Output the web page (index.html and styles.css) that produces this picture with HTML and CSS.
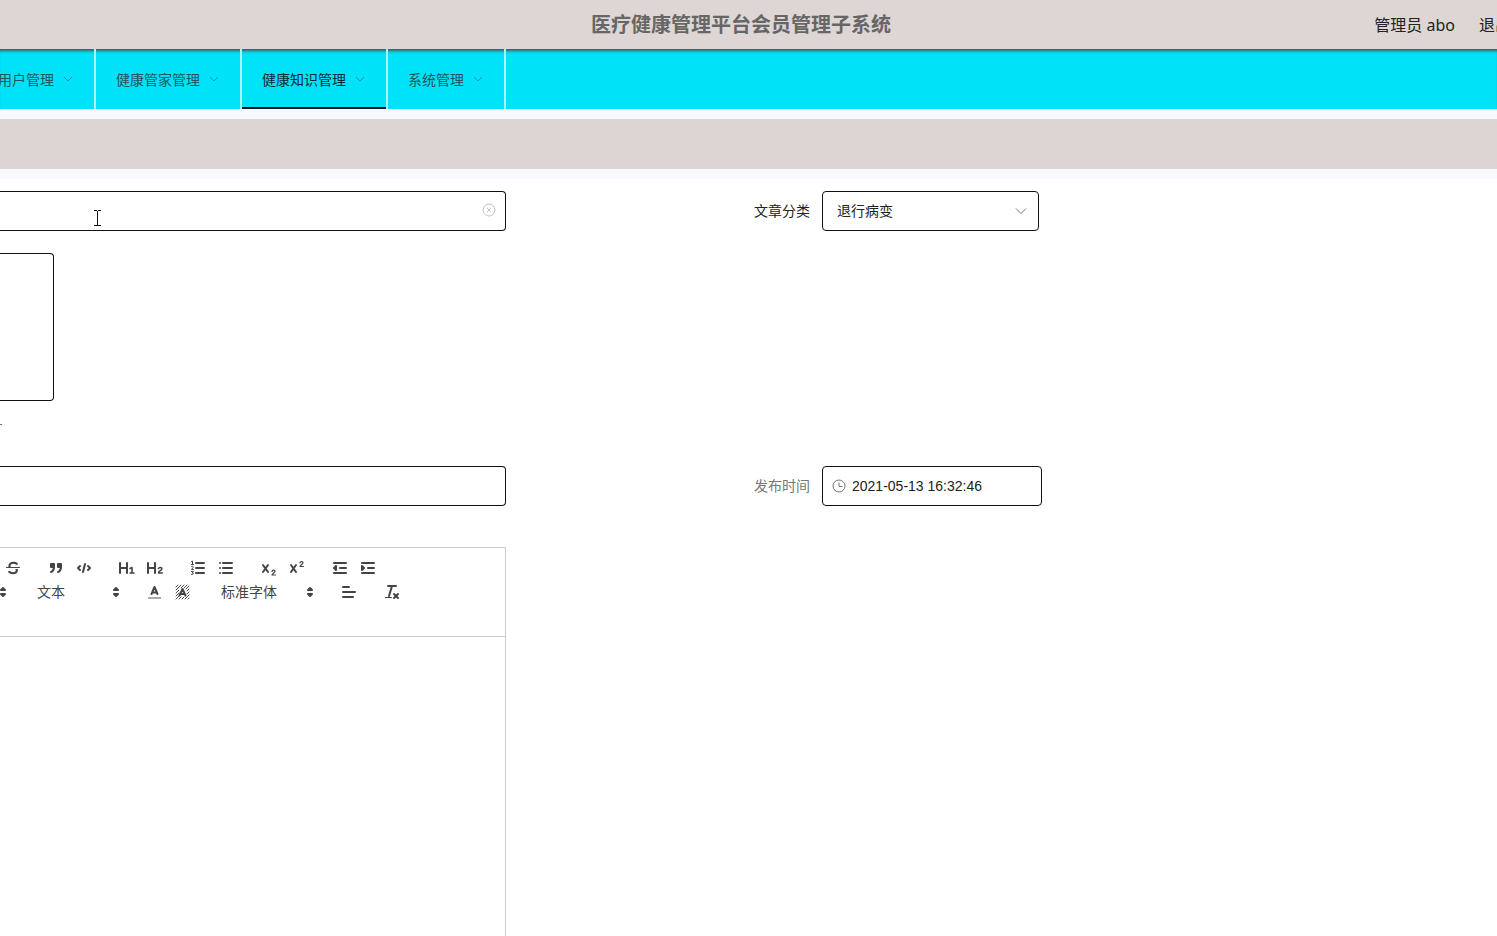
FILE: index.html
```html
<!DOCTYPE html>
<html lang="zh-CN">
<head>
<meta charset="utf-8">
<title>医疗健康管理平台会员管理子系统</title>
<link rel="stylesheet" href="styles.css">
</head>
<body>
<div class="shell">
  <header class="topbar">
    <h1 class="topbar-title">医疗健康管理平台会员管理子系统</h1>
    <div class="topbar-user">
      <span>管理员 abo</span>
      <a class="logout" href="#">退出</a>
    </div>
  </header>

  <nav class="menu">
    <a class="menu-item menu-item-cut" href="#">用户管理<svg class="caret" viewBox="0 0 12 12"><path d="M2 3l4 4 4-4"/></svg></a>
    <a class="menu-item" href="#">健康管家管理<svg class="caret" viewBox="0 0 12 12"><path d="M2 3l4 4 4-4"/></svg></a>
    <a class="menu-item menu-item-active" href="#">健康知识管理<svg class="caret" viewBox="0 0 12 12"><path d="M2 3l4 4 4-4"/></svg></a>
    <a class="menu-item" href="#">系统管理<svg class="caret" viewBox="0 0 12 12"><path d="M2 3l4 4 4-4"/></svg></a>
  </nav>

  <div class="band"></div>

  <form class="form">
    <div class="row">
      <div class="field">
        <input class="control" type="text" aria-label="文章标题">
        <button class="clear" type="button" aria-label="清空"><svg width="14" height="14" viewBox="0 0 14 14"><circle cx="7" cy="7" r="6"/><path d="M5 5l4 4M9 5l-4 4"/></svg></button>
      </div>
      <div class="item">
        <label class="label label-dark" for="category">文章分类</label>
        <div class="field field-select">
          <select class="control" id="category"><option>退行病变</option></select>
          <svg class="select-arrow" width="14" height="14" viewBox="0 0 14 14"><path d="M2 4.500l5 5 5-5"/></svg>
        </div>
      </div>
    </div>

    <div class="upload">
      <button class="upload-box" type="button" aria-label="图片"></button>
      <div class="upload-tip"></div>
    </div>

    <div class="row">
      <div class="field"><input class="control" type="text" aria-label="作者"></div>
      <div class="item">
        <label class="label" for="time">发布时间</label>
        <div class="field field-date">
          <svg class="clock" width="14" height="14" viewBox="0 0 14 14"><circle cx="7" cy="7" r="6"/><path d="M7 3.500V7.500H10.500"/></svg>
          <input class="control control-date" id="time" type="text" value="2021-05-13 16:32:46">
        </div>
      </div>
    </div>

    <div class="row row-editor">
      <div class="editor">
        <div class="toolbar">
          <div class="tools">
            <div class="group group-strike">
              <button class="tool" type="button" aria-label="删除线"><svg viewBox="0 0 18 18"><path class="s thin" d="M2.500 8.500h13"/><path class="f" d="M6.753 8a2.700 2.700 0 0 1-.253-.9C6.500 5.500 7.700 4.800 9.300 4.800c1.200 0 2.200.3 3 .9.500.4 1.100.2 1.400-.2s.2-1-.2-1.400C12.400 3.300 11 2.800 9.300 2.800 6.300 2.800 4.400 4.500 4.400 6.900c0 .4 0 .8.100 1.100zM11 10c.6.400.8.800.8 1.300 0 1.300-1.100 1.900-2.800 1.900-1.300 0-2.400-.4-3.200-1.100a1 1 0 0 0-1.400 1.500c1.200 1.100 2.800 1.600 4.600 1.600 2.900 0 4.900-1.400 4.900-3.900 0-.5-.1-.9-.2-1.300z"/></svg></button>
            </div>
            <div class="group">
              <button class="tool" type="button" aria-label="引用"><svg viewBox="0 0 18 18"><rect class="f s" height="3" width="3" x="4" y="5"/><rect class="f s" height="3" width="3" x="11" y="5"/><path class="f s" d="M7 8c0 4.031-3 5-3 5"/><path class="f s" d="M14 8c0 4.031-3 5-3 5"/></svg></button>
              <button class="tool" type="button" aria-label="代码"><svg viewBox="0 0 18 18"><path class="s" d="M5 7L3 9l2 2M13 7l2 2-2 2M10 5L8 13"/></svg></button>
            </div>
            <div class="group">
              <button class="tool" type="button" aria-label="标题1"><svg viewBox="0 0 18 18"><path class="s" d="M2 4v10M9 4v10M2 9h7"/><path class="s mid" d="M12 9.500L14 8.500V14M12 14h4"/></svg></button>
              <button class="tool" type="button" aria-label="标题2"><svg viewBox="0 0 18 18"><path class="s" d="M2 4v10M9 4v10M2 9h7"/><path class="s mid" d="M12.500 9.500c.6-1.500 3.500-1.300 3.300.4 0 1.300-3.300 2.500-3.300 4.100h3.700"/></svg></button>
            </div>
            <div class="group">
              <button class="tool" type="button" aria-label="有序列表"><svg viewBox="0 0 18 18"><path class="s" d="M7 4h8M7 9h8M7 14h8"/><path class="s thin" d="M2.500 2.500l1-.5v3.500M2.500 5.500h2M2.500 7.500c1-.7 2 0 1.700.8L2.500 10.500h2M2.500 12.500h1.900L3.200 14c1.800-.2 1.600 2.100-.7 1.500"/></svg></button>
              <button class="tool" type="button" aria-label="无序列表"><svg viewBox="0 0 18 18"><path class="s" d="M6 4h9M6 9h9M6 14h9M3 4h0M3 9h0M3 14h0"/></svg></button>
            </div>
            <div class="group">
              <button class="tool" type="button" aria-label="下标"><svg viewBox="0 0 18 18"><path class="s" d="M3 6l5 7M8 6l-5 7"/><path class="s small" d="M12 12.500c.2-2 3-1.700 3 0 0 1-3 2-3 3.500h3.500"/></svg></button>
              <button class="tool" type="button" aria-label="上标"><svg viewBox="0 0 18 18"><path class="s" d="M3 6l5 7M8 6l-5 7"/><path class="s small" d="M12 4c.2-2 3-1.700 3 0 0 1-3 2-3 3.500h3.500"/></svg></button>
            </div>
            <div class="group">
              <button class="tool" type="button" aria-label="减少缩进"><svg viewBox="0 0 18 18"><path class="s" d="M3 14h12M3 4h12M9 9h6"/><path class="f s" d="M5 7v4L3 9z"/></svg></button>
              <button class="tool" type="button" aria-label="增加缩进"><svg viewBox="0 0 18 18"><path class="s" d="M3 14h12M3 4h12M9 9h6"/><path class="f s" d="M3 7v4l2-2z"/></svg></button>
            </div>
          </div>
          <div class="tools">
            <div class="group group-size">
              <button class="tool tool-arrow" type="button" aria-label="字号"><svg viewBox="0 0 18 18"><path class="f s" d="M7 11l2 2 2-2zM7 7l2-2 2 2z"/></svg></button>
            </div>
            <div class="group picker picker-header">
              <select class="picker-select" aria-label="段落"><option>文本</option></select>
              <svg class="picker-arrow" viewBox="0 0 18 18"><path class="f s" d="M7 11l2 2 2-2zM7 7l2-2 2 2z"/></svg>
            </div>
            <div class="group">
              <button class="tool" type="button" aria-label="文字颜色"><svg viewBox="0 0 18 18"><path class="s pale" d="M3 15h13"/><path class="s" d="M6.500 11L9.500 4l3 7M7.500 9.500h4"/></svg></button>
              <button class="tool" type="button" aria-label="背景颜色"><svg viewBox="0 0 18 18"><path class="s hatch" d="M3 4l2-2M3 7l5-5M3 10l3-3M8 5l3-3M3 13l3-3M3 16l4-4M6 16l2-2M9 16l2-2M11 5l3-3M13 6l3-3M14 8l2-2M14 11l2-2M12 16l4-4M15 16l1-1"/><path class="s" d="M6.500 12.500L9.500 6l3 6.500M7.500 11h4"/></svg></button>
            </div>
            <div class="group picker picker-font">
              <select class="picker-select" aria-label="字体"><option>标准字体</option></select>
              <svg class="picker-arrow" viewBox="0 0 18 18"><path class="f s" d="M7 11l2 2 2-2zM7 7l2-2 2 2z"/></svg>
            </div>
            <div class="group">
              <button class="tool" type="button" aria-label="对齐"><svg viewBox="0 0 18 18"><path class="s" d="M4 9h12M4 14h10M4 4h6"/></svg></button>
            </div>
            <div class="group">
              <button class="tool" type="button" aria-label="清除格式"><svg viewBox="0 0 18 18"><path class="s" d="M6 3h8M7 13L10 3M12 11l4 4M16 11l-4 4"/><path class="s thin" d="M3.500 14.500h6"/></svg></button>
            </div>
          </div>
        </div>
        <textarea class="editor-body" aria-label="文章内容"></textarea>
      </div>
    </div>
  </form>
  <svg class="pointer" width="9" height="17" viewBox="0 0 9 17"><path d="M1 .5h3M5 .5h3M4.500 1v15M1 15.500h3M5 15.500h3"/></svg>
</div>
</body>
</html>
```

FILE: styles.css
```css
* { box-sizing: border-box; }

body {
  margin: 0;
  background: #fff;
  color: #222;
  font: 14px/20px "Noto Sans", "Noto Sans CJK SC", sans-serif;
}

button, input, select, textarea { font: inherit; color: inherit; }

button { padding: 0; border: 0; background: none; }

a { color: inherit; text-decoration: none; }

svg { display: block; fill: none; }

.shell {
  position: relative;
  display: flex;
  flex-direction: column;
  height: 100vh;
  overflow: hidden;
}

.topbar {
  display: grid;
  grid-template-columns: 591fr auto 606fr;
  align-items: center;
  height: 49px;
  flex: none;
  background: #ddd6d4;
}

.topbar-title {
  grid-column: 2;
  margin: 0;
  color: #666;
  font-size: 20px;
  line-height: 49px;
  white-space: nowrap;
}

.topbar-user {
  display: flex;
  justify-content: flex-end;
  gap: 24px;
  font-size: 16px;
  line-height: 46px;
  white-space: nowrap;
}

.logout { width: 18px; overflow: hidden; }

.menu {
  display: flex;
  flex: none;
  height: 60px;
  background: #00e2f8;
  box-shadow: inset 0 4px 3px -2px rgba(90, 50, 50, 0.8);
}

.menu-item {
  display: flex;
  align-items: center;
  gap: 8px;
  padding: 2px 20px 0;
  border-right: 2px solid #a8f5fc;
  color: #24545c;
  white-space: nowrap;
}

.menu-item-cut {
  justify-content: flex-end;
  width: 96px;
  padding-left: 0;
  overflow: hidden;
}

.menu-item-active {
  color: #102a30;
  box-shadow: inset 0 -2px #06171c;
}

.caret { flex: none; width: 12px; height: 12px; stroke: #1a93ad; }

.band {
  flex: none;
  height: 70px;
  border: solid #f8f9fc;
  border-width: 10px 0;
  background: #ddd5d3;
}

.form {
  display: flex;
  flex: 1;
  flex-direction: column;
  padding-top: 12px;
}

.row {
  display: grid;
  grid-template-columns: 506fr 991fr;
}

.item { display: flex; }

.label {
  width: 316px;
  padding-right: 12px;
  color: #777;
  line-height: 40px;
  text-align: right;
}

.label-dark { color: #222; }

.field { position: relative; }

.field-select { width: 217px; }

.field-date { width: 220px; }

.control {
  display: block;
  width: 100%;
  height: 40px;
  padding: 0 14px;
  border: 1px solid #111;
  border-radius: 4px;
  background: #fff;
  appearance: none;
}

.row > .field .control { border-left: 0; border-radius: 0 4px 4px 0; }

.control-date {
  padding-left: 29px;
  font-family: "Liberation Sans", sans-serif;
}

.clear {
  position: absolute;
  top: 12px;
  right: 10px;
}

.clear svg { stroke: #c4c4c4; }

.select-arrow {
  position: absolute;
  top: 13px;
  right: 11px;
  stroke: #777;
  pointer-events: none;
}

.clock {
  position: absolute;
  top: 13px;
  left: 10px;
  stroke: #777;
}

.upload { height: 191px; margin: 22px 0; }

.upload-box {
  display: block;
  width: 54px;
  height: 148px;
  border: 1px solid #111;
  border-left: 0;
  border-radius: 0 4px 4px 0;
}

.upload-tip {
  width: 2px;
  height: 1px;
  margin-top: 23px;
  background: #579;
}

.row-editor { flex: 1; margin-top: 41px; }

.editor {
  display: flex;
  flex-direction: column;
  border: solid #ccc;
  border-width: 1px 1px 0 0;
}

.toolbar {
  height: 89px;
  padding: 8px 0;
  border-bottom: 1px solid #ccc;
}

.tools { display: flex; gap: 15px; height: 24px; }

.group { display: flex; flex: none; }

.group-strike { justify-content: flex-end; width: 27px; }

.group-size { justify-content: flex-end; width: 12px; overflow: hidden; }

.tool { flex: none; width: 28px; height: 24px; padding: 3px 5px; }

.tool-arrow { width: 18px; padding: 3px 0; }

.s {
  stroke: #444;
  stroke-width: 2;
  stroke-linecap: round;
  stroke-linejoin: round;
}

.mid { stroke-width: 1.6; }

.small { stroke-width: 1.2; }

.thin, .hatch { stroke-width: 1; }

.pale { stroke: #aaa; stroke-linecap: butt; }

.f { fill: #444; }

.picker { position: relative; }

.picker-header { width: 98px; }

.picker-font { width: 108px; }

.picker-select {
  width: 100%;
  padding: 0 18px 0 10px;
  border: 0;
  background: none;
  color: #444;
  appearance: none;
}

.picker-arrow {
  position: absolute;
  top: 3px;
  right: 0;
  width: 18px;
  height: 18px;
  pointer-events: none;
}

.editor-body {
  flex: 1;
  width: 100%;
  padding: 12px 15px;
  border: 0;
  outline: 0;
  resize: none;
}

.pointer {
  position: absolute;
  top: 210px;
  left: 93px;
  stroke: #111;
  pointer-events: none;
}
```
